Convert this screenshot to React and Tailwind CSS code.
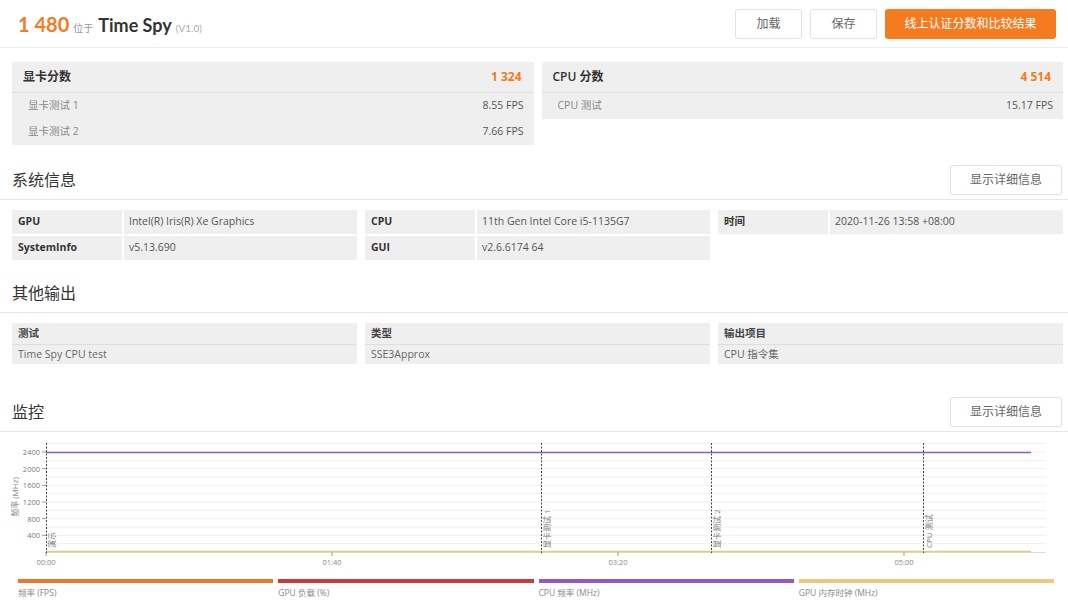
import React from "react";

const sysInfo = [
  [
    ["GPU", "Intel(R) Iris(R) Xe Graphics"],
    ["SystemInfo", "v5.13.690"],
  ],
  [
    ["CPU", "11th Gen Intel Core i5-1135G7"],
    ["GUI", "v2.6.6174 64"],
  ],
  [["时间", "2020-11-26 13:58 +08:00"]],
];

const otherOut = [
  ["测试", "Time Spy CPU test"],
  ["类型", "SSE3Approx"],
  ["输出项目", "CPU 指令集"],
];

const legend = [
  { color: "bg-[#e8792b]", label: "频率 (FPS)" },
  { color: "bg-[#c93b3b]", label: "GPU 负载 (%)" },
  { color: "bg-[#9457c4]", label: "CPU 频率 (MHz)" },
  { color: "bg-[#e9c97c]", label: "GPU 内存时钟 (MHz)" },
];

function SectionHeader({ title, button }) {
  return (
    <div className="flex h-[40px] items-center justify-between border-b border-[#e6e6e6] pl-[12px] pr-[6px]">
      <div className="text-[16px] text-[#333]">{title}</div>
      {button && (
        <button className="h-[30px] w-[112px] rounded-[3px] border border-[#e2e2e2] bg-white text-[12px] text-[#666]">
          显示详细信息
        </button>
      )}
    </div>
  );
}

function ScorePanel({ title, score, rows }) {
  return (
    <div className="bg-[#efefef]">
      <div className="flex h-[31px] items-center justify-between border-b border-[#dedede] pl-[11px] pr-[12px]">
        <span className="text-[12px] font-semibold text-[#333]">{title}</span>
        <span className="text-[12px] font-bold text-[#f47b20]">{score}</span>
      </div>
      {rows.map(([k, v]) => (
        <div key={k} className="flex h-[26px] items-center justify-between pl-[16px] pr-[10px] text-[10.5px]">
          <span className="text-[#888]">{k}</span>
          <span className="text-[#555]">{v}</span>
        </div>
      ))}
    </div>
  );
}

function Chart() {
  const y = (v) => 120 - v / 24;
  const grid = [];
  for (let v = 200; v <= 2600; v += 200) grid.push(v);
  const markers = [
    { x: 46, label: "演示" },
    { x: 541, label: "显卡测试 1" },
    { x: 711, label: "显卡测试 2" },
    { x: 923, label: "CPU 测试" },
  ];
  const ticks = [
    { x: 46, label: "00:00" },
    { x: 332, label: "01:40" },
    { x: 618, label: "03:20" },
    { x: 904, label: "05:00" },
  ];
  return (
    <svg width="1068" height="142" className="block">
      {grid.map((v) => (
        <line key={v} x1="46" x2="1046" y1={y(v)} y2={y(v)} stroke="#f0f0f4" strokeWidth="1" />
      ))}
      <line x1="46" x2="1046" y1="120.5" y2="120.5" stroke="#dcdcdc" />
      {[400, 800, 1200, 1600, 2000, 2400].map((v) => (
        <g key={v}>
          <line x1="42" x2="46" y1={y(v)} y2={y(v)} stroke="#999" />
          <text x="40" y={y(v) + 3} textAnchor="end" fontSize="7.5" fill="#777">
            {v}
          </text>
        </g>
      ))}
      <text
        transform="translate(18 65) rotate(-90)"
        textAnchor="middle"
        fontSize="8"
        fill="#888"
      >
        频率 (MHz)
      </text>
      {ticks.map((t) => (
        <g key={t.label}>
          <line x1={t.x} x2={t.x} y1="120" y2="124" stroke="#999" />
          <text x={t.x} y="133" textAnchor="middle" fontSize="7.5" fill="#888">
            {t.label}
          </text>
        </g>
      ))}
      <line x1="46" x2="1031" y1="20.5" y2="20.5" stroke="#9457c4" strokeWidth="1.6" />
      <line x1="46" x2="1031" y1="119.5" y2="119.5" stroke="#e9c97c" strokeWidth="1.6" />
      {markers.map((m) => (
        <g key={m.label}>
          <line x1={m.x + 0.5} x2={m.x + 0.5} y1="11" y2="121" stroke="#444" strokeDasharray="2 1.5" />
          <text
            transform={`translate(${m.x + 9} 116) rotate(-90)`}
            fontSize="8"
            fill="#777"
          >
            {m.label}
          </text>
        </g>
      ))}
    </svg>
  );
}

export default function App() {
  return (
    <div className="w-[1068px] bg-white font-['Open_Sans','Noto_Sans_CJK_SC',sans-serif]">
      <div className="flex h-[48px] items-center justify-between border-b border-[#ececec] pl-[18px] pr-[12px]">
        <div className="flex items-baseline font-['Lato','Noto_Sans_CJK_SC',sans-serif]">
          <span className="text-[20px] font-bold text-[#f47b20]">1 480</span>
          <span className="ml-[4px] text-[10px] text-[#999]">位于</span>
          <span className="ml-[5px] text-[18px] font-bold text-[#333]">Time Spy</span>
          <span className="ml-[4px] text-[10px] text-[#aaa]">(V1.0)</span>
        </div>
        <div className="flex gap-[8px]">
          <button className="h-[30px] w-[67px] rounded-[3px] border border-[#e2e2e2] bg-white text-[12px] text-[#666]">
            加载
          </button>
          <button className="h-[30px] w-[67px] rounded-[3px] border border-[#e2e2e2] bg-white text-[12px] text-[#666]">
            保存
          </button>
          <button className="h-[30px] w-[171px] rounded-[3px] bg-[#f47b20] text-[12px] text-white">
            线上认证分数和比较结果
          </button>
        </div>
      </div>

      <div className="grid grid-cols-2 items-start gap-[8px] pl-[12px] pr-[5px] pt-[14px]">
        <ScorePanel
          title="显卡分数"
          score="1 324"
          rows={[
            ["显卡测试 1", "8.55 FPS"],
            ["显卡测试 2", "7.66 FPS"],
          ]}
        />
        <ScorePanel title="CPU 分数" score="4 514" rows={[["CPU 测试", "15.17 FPS"]]} />
      </div>

      <div className="mt-[15px]">
        <SectionHeader title="系统信息" button />
      </div>
      <div className="grid grid-cols-3 items-start gap-x-[8px] pl-[12px] pr-[5px] pt-[10px]">
        {sysInfo.map((col, i) => (
          <div key={i} className="flex flex-col gap-[2px]">
            {col.map(([k, v]) => (
              <div key={k} className="flex h-[24px] gap-[2px] text-[10.5px]">
                <div className="flex w-[110px] items-center bg-[#efefef] pl-[6px] font-bold text-[#333]">{k}</div>
                <div className="flex flex-1 items-center bg-[#efefef] pl-[5px] text-[#555]">{v}</div>
              </div>
            ))}
          </div>
        ))}
      </div>

      <div className="mt-[13px]">
        <SectionHeader title="其他输出" />
      </div>
      <div className="grid grid-cols-3 gap-x-[8px] pl-[12px] pr-[5px] pt-[10px]">
        {otherOut.map(([k, v]) => (
          <div key={k} className="bg-[#efefef] text-[10.5px]">
            <div className="flex h-[22px] items-center border-b border-[#dedede] pl-[6px] font-semibold text-[#444]">{k}</div>
            <div className="flex h-[19px] items-center pl-[6px] text-[#666]">{v}</div>
          </div>
        ))}
      </div>

      <div className="mt-[28px]">
        <SectionHeader title="监控" button />
      </div>
      <Chart />
      <div className="mt-[5px] grid grid-cols-4 gap-[5px] pl-[18px] pr-[14px]">
        {legend.map((l) => (
          <div key={l.label}>
            <div className={`h-[4px] ${l.color}`} />
            <div className="mt-[4px] text-[8.5px] text-[#888]">{l.label}</div>
          </div>
        ))}
      </div>
    </div>
  );
}
